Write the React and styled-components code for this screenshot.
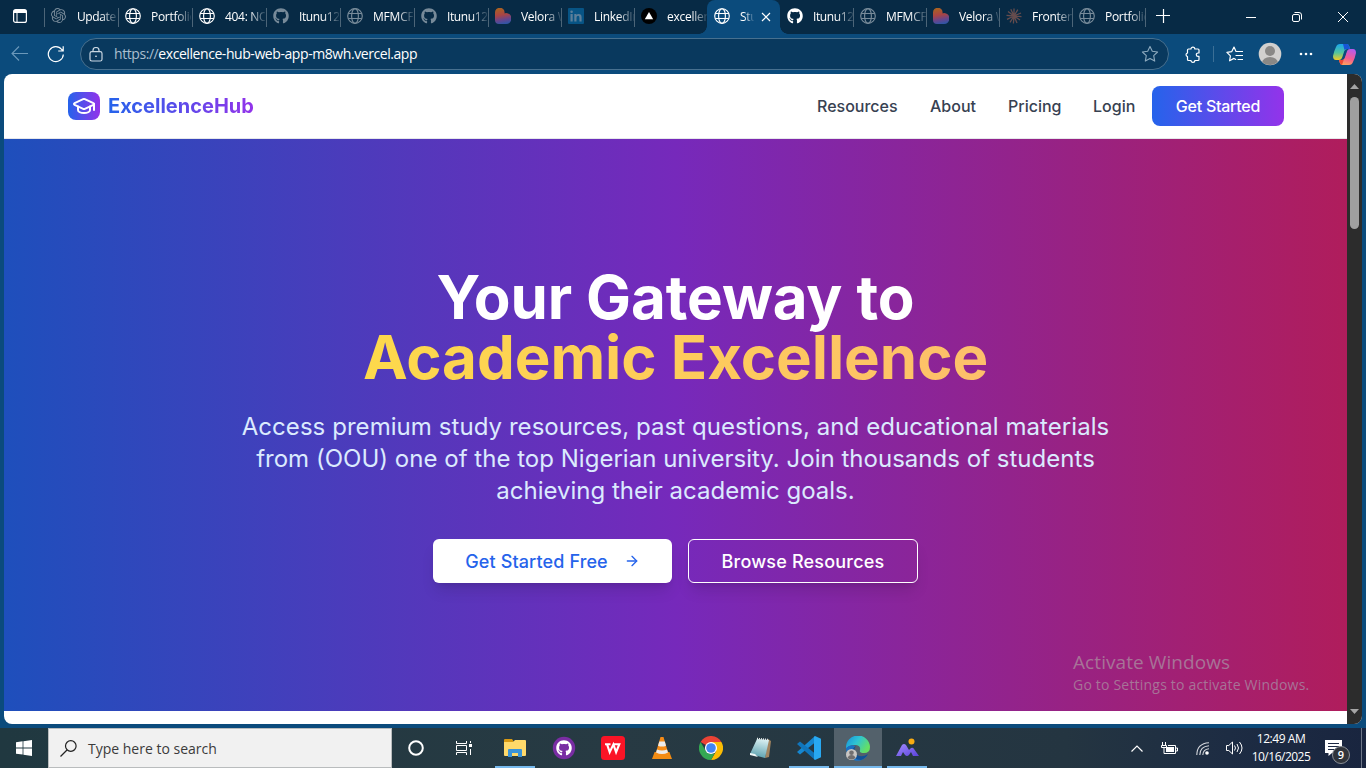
import React from "react";
import styled, { createGlobalStyle, css } from "styled-components";
import { FaGithub } from "react-icons/fa";
import { SiOpenai } from "react-icons/si";
import { GraduationCap, ArrowRight } from "lucide-react";

const Global = createGlobalStyle`
  * { box-sizing: border-box; }
  body { margin: 0; overflow: hidden; background: #0b4a7a; }
  button { font: inherit; border: 0; padding: 0; background: none; color: inherit; }
  svg { display: block; flex: none; }
`;

const ui = css`font-family: "Open Sans", "Noto Sans", sans-serif;`;

const Desktop = styled.div`
  width: 1366px;
  height: 768px;
  display: flex;
  flex-direction: column;
  background: #0b4b7c;
  ${ui}
`;

/* Browser chrome */
const TabStrip = styled.div`
  height: 34px;
  display: flex;
  background: #072a45;
  color: #fff;
`;
const TabMenu = styled.div`
  width: 44px;
  padding: 9px 0 0 13px;
`;
const Tab = styled.div`
  width: ${(p) => p.$w}px;
  height: 34px;
  display: flex;
  align-items: center;
  padding: 0 0 2px 7px;
  position: relative;
  border-radius: 8px 8px 0 0;
  background: ${(p) => (p.$active ? "#0b4b7c" : "transparent")};
  &::before {
    content: "";
    position: absolute;
    left: 0;
    top: 8px;
    width: 1px;
    height: 19px;
    background: ${(p) => (p.$line ? "#4c6578" : "transparent")};
  }
  ${(p) =>
    p.$active &&
    css`
      &::after {
        content: "";
        position: absolute;
        bottom: 0;
        left: -8px;
        right: -8px;
        height: 8px;
        background: radial-gradient(circle at 0 0, transparent 7.5px, #0b4b7c 8px) left / 8px 8px no-repeat,
          radial-gradient(circle at 100% 0, transparent 7.5px, #0b4b7c 8px) right / 8px 8px no-repeat;
      }
    `}
`;
const Favicon = styled.span`
  width: 16px;
  height: 16px;
  display: flex;
  opacity: ${(p) => (p.$dim ? 0.45 : 1)};
`;
const TabTitle = styled.span`
  margin: 1px 0 0 10px;
  width: ${(p) => (p.$short ? 14 : 40)}px;
  overflow: hidden;
  white-space: nowrap;
  font-size: 12px;
  line-height: 18px;
  letter-spacing: ${(p) => p.$ls ?? -0.3}px;
  mask-image: linear-gradient(90deg, #000 ${(p) => (p.$short ? 30 : 60)}%, transparent 105%);
`;
const TabClose = styled.span`
  margin: 1px 0 0 7px;
`;
const NewTab = styled.div`
  width: 36px;
  padding: 9px 0 0 11px;
  position: relative;
  &::before {
    content: "";
    position: absolute;
    left: 0;
    top: 8px;
    width: 1px;
    height: 19px;
    background: #4c6578;
  }
`;
const WindowControls = styled.div`
  margin-left: auto;
  display: flex;
  align-items: center;
  > * { width: 46px; height: 34px; display: flex; align-items: center; justify-content: center; }
`;
const Toolbar = styled.div`
  height: 40px;
  display: flex;
  align-items: center;
  background: #0b4b7c;
  color: #fff;
  padding-left: 11px;
`;
const ReloadIcon = styled.svg`
  margin-left: 18px;
`;
const AddressBar = styled.div`
  width: 1089px;
  height: 32px;
  margin-left: 15px;
  border: 1px solid #47708f;
  border-radius: 16px;
  background: #09395e;
  display: flex;
  align-items: center;
  padding: 0 9px 0 8px;
`;
const Url = styled.div`
  margin-left: 11px;
  flex: 1;
  font-size: 14px;
  letter-spacing: -0.43px;
  line-height: 20px;
  white-space: nowrap;
  span { color: #a9bfd0; }
`;
const FavoriteButton = styled.div`
  color: #8daabe;
`;
const ToolIcons = styled.div`
  flex: 1;
  display: flex;
  align-items: center;
  padding-left: 15px;
`;
const ToolDivider = styled.i`
  width: 1px;
  height: 16px;
  margin: 0 12px 0 12px;
  background: #3b6f96;
`;
const AvatarIcon = styled.svg`
  margin-left: 15px;
`;
const MoreIcon = styled.svg`
  margin-left: 17px;
`;
const CopilotButton = styled.div`
  margin-left: 20px;
`;

/* Web page */
const Viewport = styled.div`
  width: 1358px;
  height: 650px;
  margin-left: 4px;
  display: flex;
  border-radius: 8px;
  overflow: hidden;
  background: #fff;
`;
const Page = styled.main`
  width: 1343px;
  display: flex;
  flex-direction: column;
  font-family: Inter, sans-serif;
`;
const Nav = styled.nav`
  height: 65px;
  border-bottom: 1px solid #e5e7eb;
  padding: 0 63px 0 64px;
  display: flex;
  align-items: center;
`;
const BrandMark = styled.span`
  width: 32px;
  height: 28px;
  border-radius: 8px;
  display: grid;
  place-items: center;
  color: #fff;
  background: linear-gradient(90deg, #2563eb, #9333ea);
`;
const BrandName = styled.span`
  margin-left: 8px;
  font-size: 20px;
  line-height: 28px;
  font-weight: 700;
  color: transparent;
  background: linear-gradient(90deg, #2563eb, #9333ea);
  background-clip: text;
`;
const NavLinks = styled.div`
  margin-left: auto;
  display: flex;
  gap: 32px;
`;
const NavLink = styled.a`
  font-size: 16px;
  line-height: 24px;
  font-weight: 500;
  color: #374151;
  width: ${(p) => p.$w}px;
  white-space: nowrap;
`;
const NavButton = styled.button`
  width: 132px;
  height: 40px;
  margin-left: 16px;
  border-radius: 8px;
  font-size: 16px;
  font-weight: 500;
  letter-spacing: -0.25px;
  color: #fff;
  background: linear-gradient(90deg, #2563eb, #9333ea);
`;
const Hero = styled.section`
  height: 572px;
  padding-top: 128px;
  display: flex;
  flex-direction: column;
  align-items: center;
  text-align: center;
  color: #fff;
  background: linear-gradient(90deg, #1e4fbc, #7629bb 50%, #b01d5c);
`;
const Headline = styled.h1`
  margin: 0;
  font-size: 60px;
  line-height: 60px;
  font-weight: 700;
  white-space: nowrap;
`;
const HeadLine = styled.span`
  display: block;
  width: fit-content;
  margin: 0 auto;
  letter-spacing: -0.1px;
`;
const HeadAccent = styled(HeadLine)`
  color: transparent;
  letter-spacing: -0.04px;
  background: linear-gradient(90deg, #fdd94b, #fdbf6b);
  background-clip: text;
`;
const Lead = styled.p`
  margin: 24px 0 32px;
  font-size: 24px;
  line-height: 32px;
  color: #dbeafe;
  white-space: nowrap;
`;
const LeadLine = styled.span`
  display: block;
  letter-spacing: ${(p) => p.$ls ?? 0}px;
`;
const Actions = styled.div`
  display: flex;
  gap: 16px;
`;
const Action = styled.button`
  width: ${(p) => (p.$primary ? 239 : 230)}px;
  height: 44px;
  border-radius: 6px;
  display: flex;
  align-items: center;
  justify-content: center;
  gap: 16px;
  font-size: 18px;
  font-weight: 500;
  letter-spacing: ${(p) => (p.$primary ? 0.12 : 0.2)}px;
  white-space: nowrap;
  box-shadow: 0 10px 15px -3px rgba(0, 0, 0, 0.12), 0 4px 6px -4px rgba(0, 0, 0, 0.12);
  ${(p) =>
    p.$primary
      ? css`background: #fff; color: #2563eb;`
      : css`border: 1px solid #fff; color: #fff;`}
`;
const ScrollTrack = styled.div`
  width: 15px;
  background: #2c2c2c;
  display: flex;
  flex-direction: column;
  align-items: center;
  padding: 10px 0 10px;
`;
const ScrollThumb = styled.div`
  width: 9px;
  height: 132px;
  margin: 8px 0 auto;
  border-radius: 5px;
  background: #9f9f9f;
`;
const Watermark = styled.div`
  position: absolute;
  left: 1073px;
  top: 649px;
  color: #a77397;
  white-space: nowrap;
  ${ui}
`;
const WatermarkTitle = styled.div`
  font-size: 19px;
  line-height: 26px;
  letter-spacing: 0.08px;
`;
const WatermarkText = styled.div`
  font-size: 14px;
  line-height: 20px;
  letter-spacing: 0.2px;
`;

/* Taskbar */
const Taskbar = styled.footer`
  height: 40px;
  margin-top: 4px;
  display: flex;
  color: #fff;
  background: linear-gradient(90deg, #203840 0%, #273a43 45%, #243541 78%, #1d2c43 90%, #19253f 100%);
`;
const StartButton = styled.div`
  width: 48px;
  display: grid;
  place-items: center;
`;
const Search = styled.div`
  width: 344px;
  border: 1px solid #b9bcbd;
  background: #f1f1f1;
  color: #3b3b3b;
  display: flex;
  align-items: center;
  gap: 11px;
  padding-left: 11px;
  font-size: 14px;
`;
const ShellButton = styled.div`
  width: 48px;
  display: grid;
  place-items: center;
`;
const Apps = styled.div`
  display: flex;
  gap: 1px;
  margin-left: 3px;
`;
const TaskItem = styled.div`
  width: 48px;
  display: grid;
  place-items: center;
  background: ${(p) => (p.$active ? "#53616b" : "transparent")};
  position: relative;
  &::after {
    content: "";
    position: absolute;
    bottom: 0;
    left: ${(p) => (p.$active ? 0 : 4)}px;
    right: ${(p) => (p.$active ? 0 : 4)}px;
    height: 2px;
    background: ${(p) => (p.$open ? "#76b9ed" : "transparent")};
  }
`;
const Tray = styled.div`
  margin-left: auto;
  display: flex;
  align-items: center;
`;
const TrayIcon = styled.div`
  width: ${(p) => p.$w}px;
  display: grid;
  place-items: center;
`;
const Clock = styled.div`
  width: 62px;
  text-align: center;
  font-size: 12px;
  line-height: 18px;
  letter-spacing: -0.45px;
  white-space: nowrap;
  span { display: block; }
  span + span { letter-spacing: -0.5px; }
`;
const Notifications = styled.div`
  width: 49px;
  height: 40px;
  padding: 11px 0 0 13px;
  position: relative;
`;
const Badge = styled.span`
  position: absolute;
  left: 20px;
  top: 18px;
  width: 18px;
  height: 18px;
  border: 1px solid #8b9097;
  border-radius: 50%;
  background: #30343b;
  font-size: 11px;
  font-weight: 600;
  line-height: 16px;
  text-align: center;
`;
const ShowDesktop = styled.div`
  width: 5px;
  height: 40px;
  border-left: 1px solid #6e7788;
`;

const Globe = () => (
  <svg width="16" height="16" viewBox="0 0 16 16" fill="none" stroke="#fff" strokeWidth="1.15">
    <circle cx="8" cy="8" r="7.3" />
    <ellipse cx="8" cy="8" rx="3.4" ry="7.3" />
    <path d="M1.2 5.5h13.6M1.2 10.5h13.6" />
  </svg>
);
const Heart = () => (
  <svg width="16" height="16" viewBox="0 0 16 16">
    <defs>
      <linearGradient id="heart" x1=".3" y1="0" x2=".5" y2="1">
        <stop offset="0" stopColor="#a9641f" />
        <stop offset=".45" stopColor="#a94445" />
        <stop offset=".75" stopColor="#66458e" />
        <stop offset="1" stopColor="#3155a5" />
      </linearGradient>
    </defs>
    <path d="M0 12V4.500a4.800 4.800 0 0 1 9.600 0V5.500Q10.300 5 11 5a5.400 5.400 0 0 1 0 11H4q-4 0-4-4z" fill="url(#heart)" />
  </svg>
);
const LinkedIn = () => (
  <svg width="16" height="16" viewBox="0 0 16 16">
    <rect width="16" height="16" rx="1" fill="#075485" />
    <g fill="#5c7f9a">
      <path d="M2.500 6h2.200v7.500H2.500zM6.300 6h2.100v1.100Q9 5.900 10.700 5.900q2.900 0 2.900 3.300v4.300h-2.200V9.700q0-1.900-1.300-1.900-1.600 0-1.600 2v3.700H6.300z" />
      <circle cx="3.600" cy="3.700" r="1.300" />
    </g>
  </svg>
);
const Burst = () => (
  <svg width="16" height="16" viewBox="0 0 16 16" stroke="#d97757" strokeWidth="1.3">
    <path d="M8 8V.5M8 8l3.800-6.400M8 8l7-3M8 8l7.500.7M8 8l6 4M8 8l3 7M8 8l-.6 7.500M8 8l-4 6.400M8 8l-7 3.300M8 8L.5 7.400M8 8L2 3.500M8 8L4.800 1.300" />
  </svg>
);
const Triangle = () => (
  <svg width="16" height="16" viewBox="0 0 16 16">
    <circle cx="8" cy="8" r="8" fill="#000" />
    <path d="M8 4l4.200 7.200H3.800z" fill="#fff" />
  </svg>
);

const favicons = {
  openai: <SiOpenai size={15} />,
  globe: <Globe />,
  github: <FaGithub size={16} />,
  heart: <Heart />,
  linkedin: <LinkedIn />,
  triangle: <Triangle />,
  burst: <Burst />,
};

const tabs = [
  { icon: "openai", title: "Update", dim: true, w: 74, ls: -0.4 },
  { icon: "globe", title: "Portfolio", w: 74 },
  { icon: "globe", title: "404: NOT", w: 74 },
  { icon: "github", title: "Itunu123", dim: true, w: 74, ls: -0.4 },
  { icon: "globe", title: "MFMCF", dim: true, w: 74, ls: -0.2 },
  { icon: "github", title: "Itunu123", dim: true, w: 74, ls: -0.4 },
  { icon: "heart", title: "Velora W", w: 73 },
  { icon: "linkedin", title: "LinkedIn", w: 73 },
  { icon: "triangle", title: "excellence", w: 73, ls: -0.25 },
  { icon: "globe", title: "Stud", w: 73, active: true },
  { icon: "github", title: "Itunu123", w: 73, ls: -0.4, noLine: true },
  { icon: "globe", title: "MFMCF", dim: true, w: 73, ls: -0.2 },
  { icon: "heart", title: "Velora W", w: 73 },
  { icon: "burst", title: "Frontend", dim: true, w: 73 },
  { icon: "globe", title: "Portfolio", dim: true, w: 73 },
];

const Star = () => (
  <svg width="18" height="18" viewBox="0 0 18 18" fill="none" stroke="currentColor" strokeWidth="1.1" strokeLinejoin="round">
    <path d="M9 1.400l2.300 4.900 5.300.7-3.900 3.700 1 5.400L9 13.500l-4.700 2.600 1-5.400L1.400 7l5.300-.7z" />
  </svg>
);
const Favorites = () => (
  <svg width="17" height="18" viewBox="0 0 17 18" fill="none" stroke="#fff" strokeWidth="1.200" strokeLinejoin="round" strokeLinecap="round">
    <path d="M10 6.500L8 2 5.800 6.600l-4.900.7 3.500 3.500-.8 5L8 13.400l1.700 1M10 6.500h6.500M10 10.500h6.500M12 14.500h4.500" />
  </svg>
);

const Chrome = () => (
  <svg width="24" height="24" viewBox="0 0 24 24">
    <path d="M12 12L1.600 6A12 12 0 0 1 22.400 6z" fill="#ea4335" />
    <path d="M12 6h10.400A12 12 0 0 1 12 24l5.200-9z" fill="#fbbc04" />
    <path d="M1.600 6l5.200 9q2 3 5.200 3l3.500-.5L12 24A12 12 0 0 1 1.600 6z" fill="#34a853" />
    <circle cx="12" cy="12" r="6.100" fill="#fff" />
    <circle cx="12" cy="12" r="4.800" fill="#4285f4" />
  </svg>
);
const Explorer = () => (
  <svg width="22" height="20" viewBox="0 0 22 20">
    <path d="M0 2Q0 1 1 1h7l2 3H0z" fill="#d99a13" />
    <path d="M0 4h9l2-2h10q1 0 1 1v14q0 1-1 1H1q-1 0-1-1z" fill="#ffd96a" />
    <path d="M4 19v-7q0-1 1-1h12q1 0 1 1v7h-4v-4H8v4z" fill="#3b93d7" />
  </svg>
);
const Wps = () => (
  <svg width="24" height="24" viewBox="0 0 24 24">
    <rect width="24" height="24" rx="3.500" fill="#fb1426" />
    <path d="M4 8.200h5.500M6 8.200l2.700 8 3.700-7.800 2.700 7.800 3.200-8h-6" fill="none" stroke="#fff" strokeWidth="2.100" />
  </svg>
);
const Vlc = () => (
  <svg width="20" height="24" viewBox="0 0 20 24">
    <path d="M2.600 16h14.800L20 23H0z" fill="#f28c13" />
    <path d="M8.500 1h3l5 17q-6.500 3.500-13 0z" fill="#f58b16" />
    <path d="M7.300 5.500h5.500l1.200 4.200q-4 1.700-8 0zM5 13.600q5 2 10 0l1 3q-6 3-12 0z" fill="#ecebea" />
  </svg>
);
const Notepad = () => (
  <svg width="23" height="22" viewBox="0 0 23 22">
    <defs>
      <linearGradient id="note" x1=".5" y1="0" x2=".3" y2="1">
        <stop offset="0" stopColor="#d7eef0" />
        <stop offset="1" stopColor="#579eac" />
      </linearGradient>
    </defs>
    <path d="M19 2l3 2-2 16-4 1z" fill="#a18460" />
    <path d="M8 2l12 1-4 18-15-4z" fill="url(#note)" />
    <path d="M1 16l5 1 3 3-8-2z" fill="#eef6f6" />
    <path d="M8 1.500l12 1.200" stroke="#e7ecec" strokeWidth="1.600" strokeDasharray="1 1" />
  </svg>
);
const Code = () => (
  <svg width="24" height="24" viewBox="0 0 24 24">
    <path d="M18 0v6.500L3 18.500 0 16z" fill="#1687d0" />
    <path d="M0 8l3-2.500L18 17.500V24z" fill="#1075bb" />
    <path d="M18 0l6 2.800v18.400L18 24l-1-1V1z" fill="#28a8f1" />
  </svg>
);
const Edge = () => (
  <svg width="26" height="25" viewBox="0 0 26 25">
    <defs>
      <linearGradient id="edgeTop" x1="0" y1="0" x2="1" y2=".5">
        <stop offset="0" stopColor="#168edb" />
        <stop offset=".5" stopColor="#2ec4d3" />
        <stop offset="1" stopColor="#65df64" />
      </linearGradient>
    </defs>
    <path d="M1 12A12 12 0 0 1 25 11q0 6-6 6-5 0-4-3 1-4-4-5-7-.5-10 4z" fill="url(#edgeTop)" />
    <path d="M1 12q4-4 9-2-3 3-1 8 3 6 13 2-5 6-12 4.500Q1 21 1 12z" fill="#1870c4" />
    <path d="M11 10q-4 5 1 9 5 3 11-1-2 4-7 6-8 0-9-7 0-5 4-7z" fill="#125196" />
    <circle cx="6.500" cy="18.500" r="5.500" fill="#c9c6c3" />
    <circle cx="6.500" cy="16.800" r="2.300" fill="#716f70" />
    <path d="M2.500 22q1-3 4-3t4 3q-4 3-8 0z" fill="#716f70" />
  </svg>
);
const Mountain = () => (
  <svg width="23" height="20" viewBox="0 0 23 20">
    <defs>
      <linearGradient id="mountain" x1="0" y1="0" x2="1" y2="1">
        <stop offset="0" stopColor="#a28bff" />
        <stop offset="1" stopColor="#5b43dc" />
      </linearGradient>
    </defs>
    <circle cx="15.500" cy="3.500" r="3" fill="#f9ab12" />
    <path d="M0 18L6 7q2-2 4 0l3 5 2-2q2-1 3 1l5 7h-6l-2-4-2 3q-2 2-4 0l-2-3-2 4z" fill="url(#mountain)" />
  </svg>
);
const Copilot = () => (
  <svg width="23" height="21" viewBox="0 0 23 21">
    <defs>
      <linearGradient id="copLeft" x1="0" y1="0" x2="0" y2="1">
        <stop offset="0" stopColor="#19a6ee" />
        <stop offset=".55" stopColor="#54c59c" />
        <stop offset="1" stopColor="#f4cc24" />
      </linearGradient>
      <linearGradient id="copRight" x1=".6" y1="0" x2=".3" y2="1">
        <stop offset="0" stopColor="#b65be9" />
        <stop offset=".55" stopColor="#f45b91" />
        <stop offset="1" stopColor="#ffa45a" />
      </linearGradient>
    </defs>
    <path d="M7 0h7q2 0 3 5h-3q-2 0-3 3l-2 6q-1 2-3 2H3q-3 0-3-4 1-5 3-9 1-3 4-3z" fill="url(#copLeft)" />
    <path d="M10 0h4q2 0 3 5h-3q-2 0-2.500 1z" fill="#1756d6" />
    <path d="M16 21H9q-2 0-3-5h2q3 0 4-3l2-6q1-2 3-2h3q3 0 3 4-1 5-3 9-1 3-4 3z" fill="url(#copRight)" />
    <path d="M6 16h2q2 0 3-1l-2 6q-2 0-3-5z" fill="#ee4934" />
    <path d="M12 6l2 0-3 9-3 1q1-1 2-3z" fill="#0b4b7c" />
  </svg>
);

export default function App() {
  return (
    <Desktop>
      <Global />
      <TabStrip>
        <TabMenu>
          <svg width="14" height="14" viewBox="0 0 14 14" fill="none" stroke="#fff" strokeWidth="1.200">
            <rect x=".6" y=".6" width="12.800" height="12.800" rx="2" />
            <path d="M1 2.500h12" strokeWidth="3" />
            <path d="M4 3v10" strokeWidth="1" />
          </svg>
        </TabMenu>
        {tabs.map((t, i) => (
          <Tab key={i} $w={t.w} $active={t.active} $line={!t.active && !t.noLine}>
            <Favicon $dim={t.dim}>{favicons[t.icon]}</Favicon>
            <TabTitle $short={t.active} $ls={t.ls}>{t.title}</TabTitle>
            {t.active && (
              <TabClose>
                <svg width="10" height="10" viewBox="0 0 10 10" stroke="#fff" strokeWidth="1.200">
                  <path d="M1 1l8 8M9 1L1 9" />
                </svg>
              </TabClose>
            )}
          </Tab>
        ))}
        <NewTab>
          <svg width="14" height="14" viewBox="0 0 14 14" stroke="#fff" strokeWidth="1.200">
            <path d="M7.500 0v14M0 6.500h14" />
          </svg>
        </NewTab>
        <WindowControls>
          <div>
            <svg width="10" height="10" viewBox="0 0 10 10" stroke="#fff"><path d="M0 5.500h10" /></svg>
          </div>
          <div>
            <svg width="10" height="10" viewBox="0 0 10 10" fill="none" stroke="#fff">
              <rect x=".5" y="2.500" width="7" height="7" rx="1.500" />
              <path d="M2.500.5H7q2.500 0 2.500 2.500v4.500" />
            </svg>
          </div>
          <div>
            <svg width="10" height="10" viewBox="0 0 10 10" stroke="#fff"><path d="M0 0l10 10M10 0L0 10" /></svg>
          </div>
        </WindowControls>
      </TabStrip>
      <Toolbar>
        <svg width="18" height="16" viewBox="0 0 18 16" fill="none" stroke="#6b98ba" strokeWidth="1.100">
          <path d="M17 7.500H1.500M8 .5l-7 7 7 7" />
        </svg>
        <ReloadIcon width="18" height="18" viewBox="0 0 18 18" fill="none" stroke="#fff" strokeWidth="1.200">
          <path d="M16.300 9.500A7.500 7.500 0 1 1 14.700 4.500L16 6M16.200 1.300V6h-5" />
        </ReloadIcon>
        <AddressBar>
          <svg width="14" height="15" viewBox="0 0 14 15" fill="none" stroke="#c8d6e1" strokeWidth="1.200">
            <rect x="1" y="4.600" width="12" height="9.400" rx="1.800" />
            <path d="M4 4.500V3.500a3 3 0 0 1 6 0v1" />
            <circle cx="7" cy="9.300" r=".8" fill="#fff" stroke="none" />
          </svg>
          <Url><span>https://</span>excellence-hub-web-app-m8wh.vercel.app</Url>
          <FavoriteButton><Star /></FavoriteButton>
        </AddressBar>
        <ToolIcons>
          <svg width="17" height="17" viewBox="0 0 17 17" fill="none" stroke="#fff" strokeWidth="1.200" strokeLinejoin="round">
            <path d="M4.500 3H7a1.900 1.900 0 0 1 3.800 0H14q1 0 1 1v3h-1a1.700 1.700 0 0 0 0 3.400h1v3.100q0 1-1 1h-3.200a1.900 1.900 0 0 1-3.800 0H4.500q-1 0-1-1v-2.800a1.900 1.900 0 0 1 0-3.700V4q0-1 1-1z" />
          </svg>
          <ToolDivider />
          <Favorites />
          <AvatarIcon width="24" height="24" viewBox="0 0 24 24">
            <defs><clipPath id="avatar"><circle cx="12" cy="12" r="11" /></clipPath></defs>
            <circle cx="12" cy="12" r="11.300" fill="#d2d0ce" />
            <g clipPath="url(#avatar)" fill="#8a8886">
              <circle cx="12" cy="9" r="5" />
              <ellipse cx="12" cy="21" rx="8" ry="6" />
            </g>
          </AvatarIcon>
          <MoreIcon width="14" height="4" viewBox="0 0 14 4" fill="#fff">
            <circle cx="2" cy="2" r="1.300" /><circle cx="7" cy="2" r="1.300" /><circle cx="12" cy="2" r="1.300" />
          </MoreIcon>
          <CopilotButton><Copilot /></CopilotButton>
        </ToolIcons>
      </Toolbar>

      <Viewport>
        <Page>
          <Nav>
            <BrandMark><GraduationCap size={24} strokeWidth={2} /></BrandMark>
            <BrandName>ExcellenceHub</BrandName>
            <NavLinks>
              <NavLink $w={81}>Resources</NavLink>
              <NavLink $w={46}>About</NavLink>
              <NavLink $w={53}>Pricing</NavLink>
              <NavLink $w={43}>Login</NavLink>
            </NavLinks>
            <NavButton>Get Started</NavButton>
          </Nav>
          <Hero>
            <Headline>
              <HeadLine>Your Gateway to</HeadLine>
              <HeadAccent>Academic Excellence</HeadAccent>
            </Headline>
            <Lead>
              <LeadLine $ls={0.06}>Access premium study resources, past questions, and educational materials</LeadLine>
              <LeadLine $ls={0.02}>from (OOU) one of the top Nigerian university. Join thousands of students</LeadLine>
              <LeadLine>achieving their academic goals.</LeadLine>
            </Lead>
            <Actions>
              <Action $primary>Get Started Free<ArrowRight size={16} strokeWidth={2} /></Action>
              <Action>Browse Resources</Action>
            </Actions>
          </Hero>
        </Page>
        <ScrollTrack>
          <svg width="9" height="5" viewBox="0 0 9 5" fill="#a5a5a5"><path d="M4.500 0L9 5H0z" /></svg>
          <ScrollThumb />
          <svg width="9" height="5" viewBox="0 0 9 5" fill="#a5a5a5"><path d="M4.500 5L9 0H0z" /></svg>
        </ScrollTrack>
      </Viewport>
      <Watermark>
        <WatermarkTitle>Activate Windows</WatermarkTitle>
        <WatermarkText>Go to Settings to activate Windows.</WatermarkText>
      </Watermark>

      <Taskbar>
        <StartButton>
          <svg width="16" height="16" viewBox="0 0 16 16" fill="#fff">
            <path d="M0 2.200l6.600-.9v6.200H0zM7.400 1.200L16 0v7.500H7.400zM0 8.400h6.600v6.200L0 13.700zM7.400 8.400H16V16l-8.600-1.200z" />
          </svg>
        </StartButton>
        <Search>
          <svg width="17" height="17" viewBox="0 0 17 17" fill="none" stroke="#222" strokeWidth="1.200">
            <circle cx="10.800" cy="6" r="5.300" /><path d="M7 10L.5 16.500" />
          </svg>
          <span>Type here to search</span>
        </Search>
        <ShellButton>
          <svg width="16" height="16" viewBox="0 0 16 16" fill="none" stroke="#fff" strokeWidth="2"><circle cx="8" cy="8" r="6.800" /></svg>
        </ShellButton>
        <ShellButton>
          <svg width="16" height="16" viewBox="0 0 16 16" fill="none" stroke="#fff">
            <path d="M.5 1v2.500h10V1M.5 15v-2.500h10V15M.5 5.500h10v5H.5zM14.500 1v2M14.500 9v6" />
            <path d="M13 4h3v3h-3z" fill="#fff" stroke="none" />
          </svg>
        </ShellButton>
        <Apps>
          <TaskItem $open><Explorer /></TaskItem>
          <TaskItem>
            <svg width="24" height="24" viewBox="0 0 24 24">
              <circle cx="12" cy="12" r="11.200" fill="#792da3" />
              <FaGithub x="4" y="4" size={16} color="#fff" />
            </svg>
          </TaskItem>
          <TaskItem><Wps /></TaskItem>
          <TaskItem><Vlc /></TaskItem>
          <TaskItem><Chrome /></TaskItem>
          <TaskItem><Notepad /></TaskItem>
          <TaskItem $open><Code /></TaskItem>
          <TaskItem $active $open><Edge /></TaskItem>
          <TaskItem $open><Mountain /></TaskItem>
        </Apps>
        <Tray>
          <TrayIcon $w={30}>
            <svg width="12" height="7" viewBox="0 0 12 7" fill="none" stroke="#fff" strokeWidth="1.200"><path d="M.5 6.500L6 1l5.500 5.500" /></svg>
          </TrayIcon>
          <TrayIcon $w={34}>
            <svg width="17" height="13" viewBox="0 0 17 13" fill="none" stroke="#fff">
              <path d="M1.500 0v3M4.500 0v3M.5 3.500h5v2h-5zM3 5v6.500h11.500v-8H7M15 6h1.500v3H15" />
              <path d="M5 5h8v5H5z" fill="#fff" stroke="none" />
            </svg>
          </TrayIcon>
          <TrayIcon $w={32}>
            <svg width="13" height="13" viewBox="0 0 13 13" fill="none" stroke="#d5d8dd" strokeWidth="1.100">
              <path d="M.8 13Q1 1.500 13 .8M3.800 13Q4 4.500 13 3.800M6.800 13Q7 7.500 13 6.800" />
              <circle cx="11" cy="11" r="1.800" fill="#fff" stroke="none" />
            </svg>
          </TrayIcon>
          <TrayIcon $w={32}>
            <svg width="17" height="14" viewBox="0 0 17 14" fill="none" stroke="#fff" strokeWidth="1">
              <path d="M.5 4.500h2.300L6.500 1v12L2.800 9.500H.5zM8.500 4.500q2 2.500 0 5M11 3q3 4 0 8M13.500 1q5 6 0 12" />
            </svg>
          </TrayIcon>
          <Clock><span>12:49 AM</span><span>10/16/2025</span></Clock>
          <Notifications>
            <svg width="17" height="17" viewBox="0 0 17 17">
              <path d="M0 1h17v13H7l-3.500 3v-3H0z" fill="#fff" />
              <path d="M3 4.500h11M3 7.500h11M3 10.500h7" stroke="#1d2944" />
            </svg>
            <Badge>9</Badge>
          </Notifications>
          <ShowDesktop />
        </Tray>
      </Taskbar>
    </Desktop>
  );
}
